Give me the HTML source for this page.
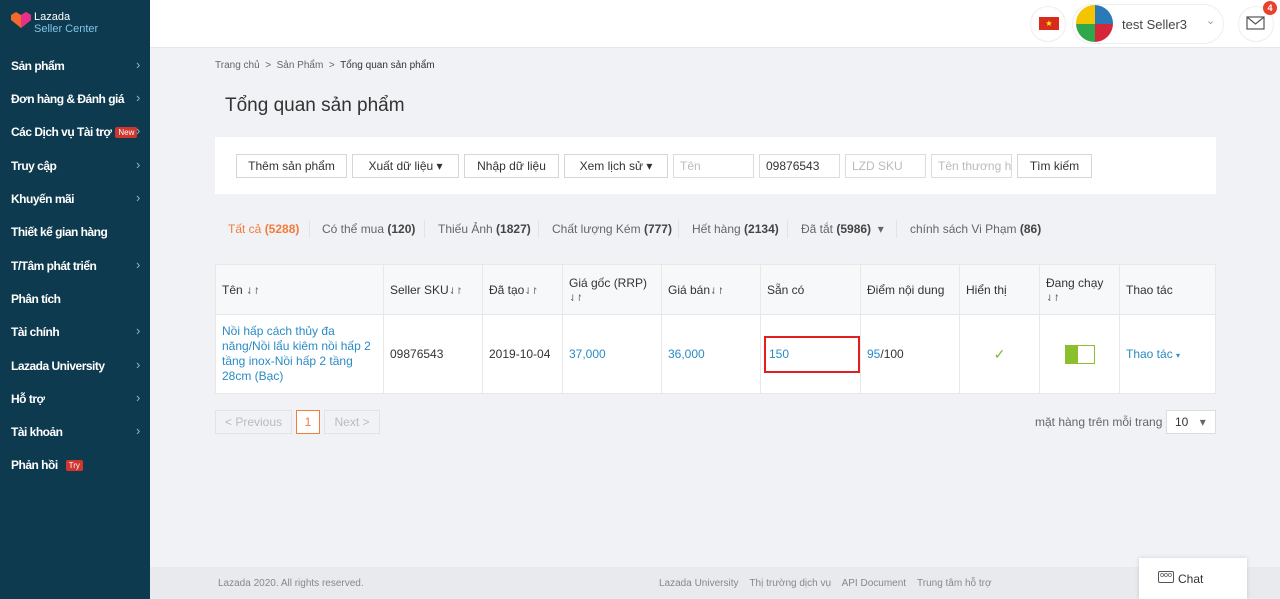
<!DOCTYPE html>
<html><head><meta charset="utf-8"><style>
*{box-sizing:border-box;margin:0;padding:0}
body{width:1280px;height:599px;overflow:hidden;background:#f1f2f6;font-family:"Liberation Sans",sans-serif;font-size:12px;color:#333;position:relative}
.side{position:absolute;left:0;top:0;width:150px;height:599px;background:#0e3a4f;color:#fff}
.side .it{position:absolute;left:11px;font-size:12px;font-weight:bold;letter-spacing:-.5px;white-space:nowrap}
.side .ar{position:absolute;left:136px;color:#9fb3bf;font-size:13px}
.badge{background:#d0352e;color:#fff;font-size:8px;font-weight:normal;padding:1px 3px;border-radius:2px;margin-left:4px;letter-spacing:0;vertical-align:1px}
.top{position:absolute;left:150px;top:0;right:0;height:48px;background:#fff;border-bottom:1px solid #e6e7eb}
.abs{position:absolute;white-space:nowrap}
.btn{position:absolute;top:154px;height:24px;border:1px solid #d6d6d6;background:#fff;font-size:12px;line-height:22px;text-align:center;color:#333;white-space:nowrap}
.inp{position:absolute;top:154px;height:24px;border:1px solid #ddd;background:#fff;font-size:12px;line-height:22px;padding-left:6px;color:#bbb;white-space:nowrap;overflow:hidden}
.tab{position:absolute;top:222px;font-size:12px;color:#666;white-space:nowrap}
.tab b{color:#444}
.sep{position:absolute;top:220px;width:1px;height:18px;background:#e3e3e3}
table{position:absolute;left:215px;top:264px;width:1001px;border-collapse:collapse;background:#fff}
td{border:1px solid #e8e8e8;padding:0 6px;font-size:12px;vertical-align:middle}
thead td{background:#f7f8fa;height:50px;color:#333}
tbody td{height:79px}
.lk{color:#2a8bc4}
.s{font-size:9px;color:#666;letter-spacing:-1px}
</style></head><body>
<div class="side">
 <svg class="abs" style="left:10px;top:11px" width="22" height="18" viewBox="0 0 22 18"><path d="M1 4 L6 1 L11 4 L16 1 L21 4 L21 9 L11 17 L1 9Z" fill="#f36a2b"/><path d="M11 4 L16 1 L21 4 L21 9 L11 17Z" fill="#e8308a"/></svg>
 <div class="abs" style="left:34px;top:11px;font-size:11px;line-height:12px;color:#fff">Lazada<br><span style="color:#7fc4e6">Seller Center</span></div>
 <div class="it" style="top:59px">Sản phẩm</div><div class="ar" style="top:57px">›</div>
 <div class="it" style="top:92px">Đơn hàng &amp; Đánh giá</div><div class="ar" style="top:90px">›</div>
 <div class="it" style="top:125px">Các Dịch vụ Tài trợ<span class="badge">New</span></div><div class="ar" style="top:123px">›</div>
 <div class="it" style="top:159px">Truy cập</div><div class="ar" style="top:157px">›</div>
 <div class="it" style="top:192px">Khuyến mãi</div><div class="ar" style="top:190px">›</div>
 <div class="it" style="top:225px">Thiết kế gian hàng</div>
 <div class="it" style="top:259px">T/Tâm phát triển</div><div class="ar" style="top:257px">›</div>
 <div class="it" style="top:292px">Phân tích</div>
 <div class="it" style="top:325px">Tài chính</div><div class="ar" style="top:323px">›</div>
 <div class="it" style="top:359px">Lazada University</div><div class="ar" style="top:357px">›</div>
 <div class="it" style="top:392px">Hỗ trợ</div><div class="ar" style="top:390px">›</div>
 <div class="it" style="top:425px">Tài khoản</div><div class="ar" style="top:423px">›</div>
 <div class="it" style="top:458px">Phản hồi<span class="badge" style="margin-left:8px">Try</span></div>
</div>
<div class="top">
 <div class="abs" style="left:880px;top:6px;width:36px;height:36px;border-radius:18px;border:1px solid #eee"></div>
 <div class="abs" style="left:889px;top:17px;width:20px;height:13px;background:#da2a1c;color:#ff0;font-size:8px;text-align:center;line-height:13px">★</div>
 <div class="abs" style="left:922px;top:4px;width:152px;height:40px;border-radius:20px;border:1px solid #eee"></div>
 <div class="abs" style="left:926px;top:5px;width:37px;height:37px;border-radius:50%;overflow:hidden"><div style="float:left;width:50%;height:50%;background:#f5c400"></div><div style="float:left;width:50%;height:50%;background:#2a7ab8"></div><div style="float:left;width:50%;height:50%;background:#2ea84a"></div><div style="float:left;width:50%;height:50%;background:#d4283a"></div></div>
 <div class="abs" style="left:972px;top:17px;font-size:13px;color:#444">test Seller3</div>
 <div class="abs" style="left:1056px;top:14px;color:#999;font-size:11px">⌄</div>
 <div class="abs" style="left:1088px;top:6px;width:36px;height:36px;border-radius:18px;border:1px solid #eee"></div>
 <svg class="abs" style="left:1096px;top:16px" width="19" height="14"><rect x="1" y="1" width="17" height="12" fill="none" stroke="#555" stroke-width="1.2"/><path d="M1 1 L9.5 8 L18 1" fill="none" stroke="#555" stroke-width="1.2"/></svg>
 <div class="abs" style="left:1113px;top:1px;width:14px;height:14px;border-radius:7px;background:#e8412c;color:#fff;font-size:9px;text-align:center;line-height:14px;font-weight:bold">4</div>
</div>
<div class="abs" style="left:215px;top:60px;font-size:10px;color:#666">Trang chủ &nbsp;&gt;&nbsp; Sản Phẩm &nbsp;&gt;&nbsp; <span style="color:#333">Tổng quan sản phẩm</span></div>
<div class="abs" style="left:225px;top:95px;font-size:19px;color:#333">Tổng quan sản phẩm</div>
<div class="abs" style="left:215px;top:137px;width:1001px;height:57px;background:#fff"></div>
<div class="btn" style="left:236px;width:111px">Thêm sản phẩm</div>
<div class="btn" style="left:352px;width:107px">Xuất dữ liệu ▾</div>
<div class="btn" style="left:464px;width:95px">Nhập dữ liệu</div>
<div class="btn" style="left:564px;width:104px">Xem lịch sử ▾</div>
<div class="inp" style="left:673px;width:81px">Tên</div>
<div class="inp" style="left:759px;width:81px;color:#333">09876543</div>
<div class="inp" style="left:845px;width:81px">LZD SKU</div>
<div class="inp" style="left:931px;width:81px">Tên thương h</div>
<div class="btn" style="left:1017px;width:75px">Tìm kiếm</div>
<div class="tab" style="left:228px;color:#f37b3d">Tất cả <b style="color:#f37b3d">(5288)</b></div><div class="sep" style="left:309px"></div>
<div class="tab" style="left:322px">Có thể mua <b>(120)</b></div><div class="sep" style="left:424px"></div>
<div class="tab" style="left:438px">Thiếu Ảnh <b>(1827)</b></div><div class="sep" style="left:538px"></div>
<div class="tab" style="left:552px">Chất lượng Kém <b>(777)</b></div><div class="sep" style="left:678px"></div>
<div class="tab" style="left:692px">Hết hàng <b>(2134)</b></div><div class="sep" style="left:787px"></div>
<div class="tab" style="left:801px">Đã tắt <b>(5986)</b> &nbsp;▾</div><div class="sep" style="left:896px"></div>
<div class="tab" style="left:910px">chính sách Vi Phạm <b>(86)</b></div>
<table>
<thead><tr>
<td style="width:168px">Tên <span class="s">⇃↾</span></td><td style="width:99px">Seller SKU<span class="s">⇃↾</span></td><td style="width:80px">Đã tạo<span class="s">⇃↾</span></td><td style="width:99px">Giá gốc (RRP)<br><span class="s">⇃↾</span></td><td style="width:99px">Giá bán<span class="s">⇃↾</span></td><td style="width:98px">Sẵn có</td><td style="width:99px">Điểm nội dung</td><td style="width:80px">Hiển thị</td><td style="width:80px">Đang chạy<br><span class="s">⇃↾</span></td><td>Thao tác</td>
</tr></thead>
<tbody><tr>
<td class="lk" style="line-height:15px">Nồi hấp cách thủy đa năng/Nồi lẩu kiêm nồi hấp 2 tầng inox-Nồi hấp 2 tầng 28cm (Bạc)</td>
<td>09876543</td><td>2019-10-04</td><td class="lk">37,000</td><td class="lk">36,000</td>
<td style="padding:0"><div style="margin:0 0 0 3px;width:96px;height:37px;border:2px solid #e02020;line-height:33px;padding-left:3px" class="lk">150</div></td>
<td><span class="lk">95</span>/100</td>
<td style="text-align:center;color:#7bb83a;font-size:14px">✓</td>
<td style="text-align:center"><div style="display:inline-block;width:30px;height:19px;border:1px solid #8bbf2c;vertical-align:middle"><div style="width:12px;height:17px;background:#8bbf2c"></div></div></td>
<td class="lk">Thao tác <span style="font-size:8px">▾</span></td>
</tr></tbody></table>
<div class="abs" style="left:215px;top:410px;width:77px;height:24px;border:1px solid #e3e3e3;color:#bbb;line-height:22px;text-align:center">&lt; Previous</div>
<div class="abs" style="left:296px;top:410px;width:24px;height:24px;border:1px solid #f37b3d;color:#f37b3d;line-height:22px;text-align:center;background:#fff">1</div>
<div class="abs" style="left:324px;top:410px;width:56px;height:24px;border:1px solid #e3e3e3;color:#bbb;line-height:22px;text-align:center">Next &gt;</div>
<div class="abs" style="left:1035px;top:415px;color:#666">mặt hàng trên mỗi trang</div>
<div class="abs" style="left:1166px;top:410px;width:50px;height:24px;border:1px solid #ddd;background:#fff;line-height:22px;padding-left:8px">10 <span style="margin-left:8px;color:#666">▾</span></div>
<div class="abs" style="left:150px;top:567px;right:0;height:32px;background:#e9eaee;font-size:10px;color:#888">
 <span class="abs" style="left:68px;top:11px">Lazada 2020. All rights reserved.</span>
 <span class="abs" style="left:509px;top:11px">Lazada University &nbsp;&nbsp; Thị trường dịch vụ &nbsp;&nbsp; API Document &nbsp;&nbsp; Trung tâm hỗ trợ</span>
</div>
<div class="abs" style="left:1139px;top:558px;width:108px;height:41px;background:#fff;box-shadow:0 0 4px rgba(0,0,0,.15)"></div>
<div class="abs" style="left:1158px;top:571px;width:16px;height:12px;border:1px solid #555;border-radius:2px;font-size:7px;line-height:8px;text-align:center">ooo</div>
<div class="abs" style="left:1178px;top:572px;font-size:12px;color:#333">Chat</div>
</body></html>
